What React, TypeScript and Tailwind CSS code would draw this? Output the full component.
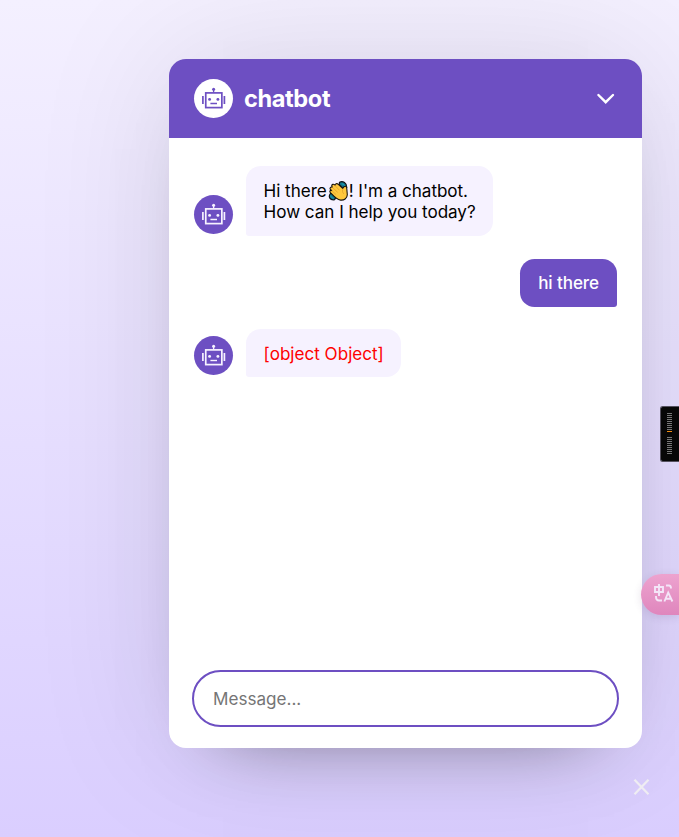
import type { ReactNode } from "react";

function Robot({ className }: { className: string }) {
  return (
    <svg viewBox="0 0 39 39" className={className} fill="none" stroke="currentColor">
      <rect x="11.75" y="13.9" width="16.1" height="14.7" strokeWidth="1.7" />
      <path d="M19.6 13.5V9.5" strokeWidth="1.3" />
      <circle cx="19.6" cy="10.3" r="1.5" fill="currentColor" stroke="none" />
      <path d="M8.9 17v8M30.4 17v8" strokeWidth="1.7" />
      <circle cx="15.6" cy="20.4" r="1.45" fill="currentColor" stroke="none" />
      <circle cx="23.9" cy="20.4" r="1.45" fill="currentColor" stroke="none" />
      <path d="M16.4 24.5h6.6" strokeWidth="1.4" />
    </svg>
  );
}

function WavingHand() {
  return (
    <svg viewBox="0 0 22 21" className="relative -top-[3px] left-px -my-1 inline-block h-[21px] w-[22px] align-[-4px]" strokeLinejoin="round" strokeLinecap="round">
      <path d="M11.5 1.2c3.5-1.5 7.3.6 7.3 5.2l-3 1.5-4.6-4.3zM2.4 12.5c-2.4 3.4-.5 6.9 4.2 6.2l1.2-2.3-3.8-4z" fill="#12758b" stroke="#101418" strokeWidth="1.2" />
      <path d="M14 2.9c1.5 0 2.6 1 2.8 2.6M2.9 15c.1 1.2.9 2 2.2 2.1" fill="none" stroke="#20a3bd" strokeWidth="1" />
      <path d="M2.2 8.2c-.7-1.3.8-2.8 2.1-1.9L3.7 5c0-1.7 1.8-2.2 2.8-1.2l.5.3c.2-1.6 2-1.9 3-1l4.7 4.2 1.2-1.5c1.6-1.3 3.2.1 2.9 2l.5 6c-.1 3.7-3.3 5.7-6.8 5.3-3.6-.3-6.5-3.6-10-7.3-1.6-1.6-.1-2.9 1.2-2.2z" fill="#ffc83d" stroke="#17130d" strokeWidth="1.1" />
      <path d="m4.3 6.3 5.1 4.8M6.5 4.1l4.6 4.8M3.9 9.8l3.8 3.5M15.2 7.5c-1.4 1.9-.8 3.5.3 5.1" fill="none" stroke="#d79529" strokeWidth=".6" />
    </svg>
  );
}

function BotMessage({ children, error = false }: { children: ReactNode; error?: boolean }) {
  return (
    <div className="flex items-end gap-[13px]">
      <div className="mb-0.5 size-[39px] shrink-0 rounded-full bg-[#6d4fc2] text-[#f6f2ff]">
        <Robot className="size-[39px]" />
      </div>
      <div className={`rounded-[14.6px] rounded-bl-[3px] bg-[#f6f2ff] px-[17.6px] ${error ? "pt-[14.8px] pb-[12.5px] text-[#ff0000]" : "py-[13.7px] text-black"}`}>
        {children}
      </div>
    </div>
  );
}

const TICKS = [0, 1, 2, 3, 4, 5, 6, 7, 8];

export default function App() {
  return (
    <div className="relative flex h-[837px] w-[679px] justify-end overflow-hidden bg-linear-to-b from-[#f4f0ff] to-[#daceff] pt-[59px] pr-[37px] font-['Inter',sans-serif] text-[17.1px] leading-[20.7px]">
      <main className="flex h-[689px] w-[473px] flex-col overflow-hidden rounded-[17px] bg-white shadow-[0_0_144px_0_rgba(0,0,0,0.1),0_36px_72px_-54px_rgba(0,0,0,0.5)]">
        <header className="flex h-[79px] shrink-0 items-center justify-between bg-[#6d4fc2] pr-6 pl-[25px] text-white">
          <div className="flex items-center gap-[11px]">
            <div className="size-[39px] rounded-full bg-white text-[#6d4fc2]">
              <Robot className="size-[39px]" />
            </div>
            <h1 className="text-[23.6px] leading-7 font-bold tracking-[-0.4px]">chatbot</h1>
          </div>
          <button aria-label="Collapse" className="flex h-8 w-6 items-center justify-center">
            <svg viewBox="0 0 24 32" className="h-8 w-6" fill="none" stroke="white" strokeWidth="2.4" strokeLinecap="round">
              <path d="m4.4 12 7.3 7.2 7.3-7.2" />
            </svg>
          </button>
        </header>
        <section className="flex flex-1 flex-col px-[25px] pt-7">
          <BotMessage>
            <p className="h-[42.6px] whitespace-nowrap leading-[21.3px] tracking-[-0.04px]">Hi there<WavingHand />! I'm a chatbot.<br />How can I help you today?</p>
          </BotMessage>
          <div className="mt-[23px] mb-[22px] self-end rounded-[14.6px] rounded-br-[3px] bg-[#6d4fc2] px-[18px] py-[13.6px] font-medium tracking-[-0.1px] text-white">hi there</div>
          <BotMessage error>[object Object]</BotMessage>
        </section>
        <form className="px-[23px] pb-[21px]">
          <input aria-label="Message" placeholder="Message..." className="h-[57px] w-full rounded-[36px] border-2 border-[#6d4fc2] bg-white px-[19px] outline-none placeholder:text-[#757575]" />
        </form>
      </main>
      <aside className="absolute top-[406px] right-0 flex h-14 w-[19px] flex-col items-center gap-[5px] rounded-l-[3px] border border-r-0 border-[#55515f] bg-[#070707] pt-1.5 pr-0.5">
        <div className="flex flex-col gap-px">
          {TICKS.map((n) => <i key={n} className="h-px w-[5px] bg-[#777]" />)}
          <i className="h-px w-[5px] bg-[#ef8c11]" />
        </div>
        <div className="flex flex-col gap-px">
          {TICKS.map((n) => <i key={n} className="h-px w-[5px] bg-[#777]" />)}
        </div>
      </aside>
      <button aria-label="Translate" className="absolute top-[574px] right-0 h-[41px] w-[38px] rounded-l-full bg-linear-to-b from-[#eda3cf] to-[#df86bd] shadow-[0_2px_9px_rgba(80,50,100,0.14)]">
        <svg viewBox="0 0 38 41" className="h-[41px] w-[38px]" fill="none" stroke="#f4e5f8" strokeWidth="1.9">
          <path d="M14 13h8v5h-8zM18 10v12M25 11.5h3q2 0 2 3M15 22v1q0 3.5 3 3.5h3M23.4 27.5l3.8-9 4.2 9M24.6 24.8h5.4" />
        </svg>
      </button>
      <button aria-label="Close" className="absolute top-[778px] left-[633px] size-[18px]">
        <svg viewBox="0 0 18 18" className="size-[18px]" stroke="#efedf2" strokeWidth="2.2">
          <path d="m1.5 1.8 14 14.5M15.5 1.8l-14 14.5" />
        </svg>
      </button>
    </div>
  );
}
